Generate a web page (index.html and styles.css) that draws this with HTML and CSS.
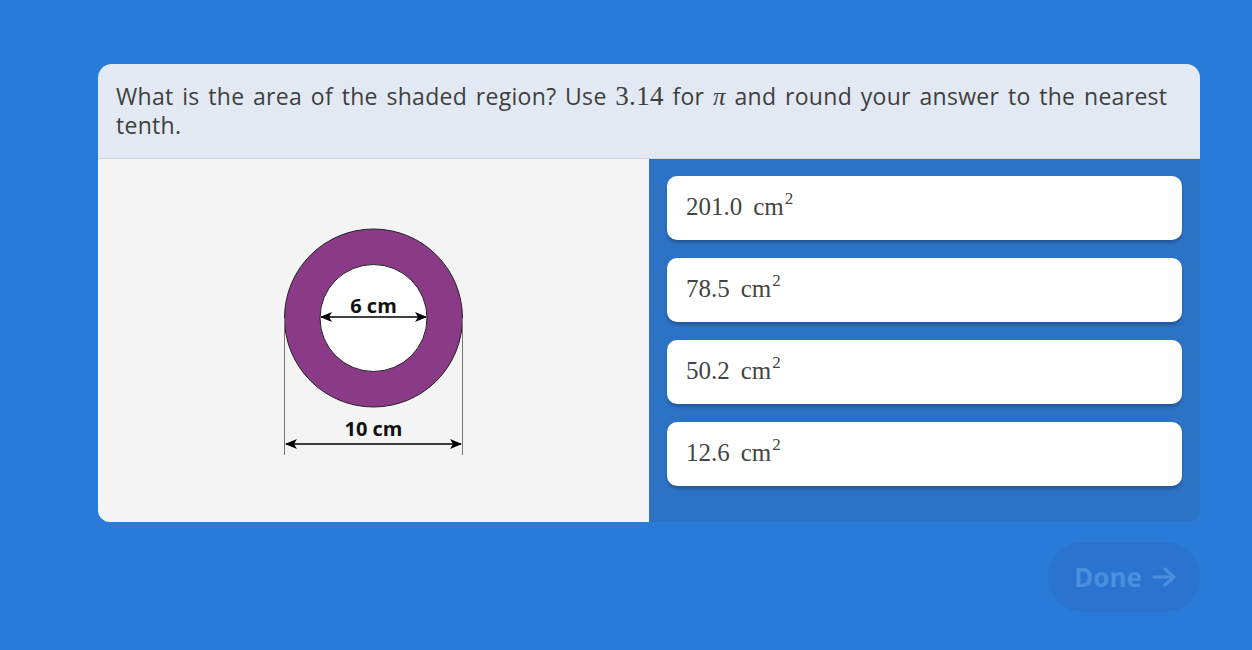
FILE: index.html
```html
<!DOCTYPE html>
<html>
<head>
<meta charset="utf-8">
<link rel="stylesheet" href="styles.css">
</head>
<body>
<div class="page">
  <div class="card">
    <div class="question">What is the area of the shaded region? Use <span class="math">3.14</span> for <span class="math pi">π</span> and round your answer to the nearest tenth.</div>
    <div class="body">
      <div class="figure">
        <svg width="190" height="232" viewBox="0 0 190 232">
          <defs>
            <marker id="ah" markerWidth="12" markerHeight="10" refX="11" refY="5" orient="auto-start-reverse" markerUnits="userSpaceOnUse">
              <path d="M0 0 L12 5 L0 10 L3 5 Z" fill="#000"/>
            </marker>
          </defs>
          <circle cx="94.5" cy="92" r="89" fill="#8a3a86" stroke="#222" stroke-width="1"/>
          <circle cx="94.5" cy="92" r="53.5" fill="#fff" stroke="#222" stroke-width="1"/>
          <line x1="5.5" y1="92" x2="5.5" y2="229" stroke="#777" stroke-width="1"/>
          <line x1="183.5" y1="92" x2="183.5" y2="229" stroke="#777" stroke-width="1"/>
          <line x1="7" y1="218" x2="182" y2="218" stroke="#000" stroke-width="1.3" marker-start="url(#ah)" marker-end="url(#ah)"/>
          <line x1="42" y1="91" x2="147" y2="91" stroke="#000" stroke-width="1.3" marker-start="url(#ah)" marker-end="url(#ah)"/>
          <text x="94.5" y="87" class="lbl">6 cm</text>
          <text x="94.5" y="210" class="lbl">10 cm</text>
        </svg>
      </div>
      <div class="answers">
        <div class="answer"><span class="num">201.0</span><span class="unit">cm<sup>2</sup></span></div>
        <div class="answer"><span class="num">78.5</span><span class="unit">cm<sup>2</sup></span></div>
        <div class="answer"><span class="num">50.2</span><span class="unit">cm<sup>2</sup></span></div>
        <div class="answer"><span class="num">12.6</span><span class="unit">cm<sup>2</sup></span></div>
      </div>
    </div>
  </div>
  <div class="footer">
    <button class="done">Done <svg width="26" height="22" viewBox="0 0 26 22"><path d="M2 11 H22 M13 3 L22 11 L13 19" fill="none" stroke="currentColor" stroke-width="3.2" stroke-linecap="round" stroke-linejoin="round"/></svg></button>
  </div>
</div>
</body>
</html>
```
FILE: styles.css
```css
html, body {
  margin: 0;
  padding: 0;
}
body {
  background: #2a7ad8;
  width: 1252px;
  height: 650px;
  overflow: hidden;
  font-family: "Open Sans", "Liberation Sans", sans-serif;
}
.page {
  padding: 64px 52px 0 98px;
}
.card {
  width: 1102px;
  border-radius: 14px 14px 12px 12px;
  overflow: hidden;
}
.question {
  background: #e2e9f2;
  color: #3f3f3f;
  font-size: 23px;
  font-weight: 500;
  line-height: 29px;
  padding: 18px 18px 18px 18px;
  border-bottom: 1px solid #cfd6de;
  letter-spacing: 0.3px;
  word-spacing: 2.4px;
}
.math {
  font-family: "Liberation Serif", "DejaVu Serif", serif;
  font-weight: 400;
  font-size: 27px;
  line-height: 1;
  letter-spacing: 0.3px;
}
.pi {
  font-style: italic;
  font-size: 25px;
}
.body {
  display: flex;
  height: 363px;
}
.figure {
  width: 551px;
  background: #f4f4f4;
  display: flex;
  align-items: center;
  justify-content: center;
  padding-top: 2px;
  box-sizing: border-box;
}
.figure svg {
  display: block;
  margin-left: 1px;
}
.lbl {
  font-family: "Open Sans", "DejaVu Sans", sans-serif;
  font-weight: 700;
  font-size: 20px;
  text-anchor: middle;
  fill: #111;
}
.answers {
  flex: 1;
  background: #2d73c5;
  padding: 17px 18px 0 18px;
  display: flex;
  flex-direction: column;
  gap: 18px;
}
.answer {
  height: 64px;
  background: #fff;
  border-radius: 10px;
  box-shadow: 0 3px 3px rgba(20, 40, 80, 0.35);
  box-sizing: border-box;
  padding: 16px 19px 0 19px;
  font-family: "Liberation Serif", "DejaVu Serif", serif;
  font-size: 25px;
  color: #444;
  line-height: 30px;
}
.answer .num {
  margin-right: 11px;
}
.answer sup {
  font-size: 17px;
  line-height: 0;
  vertical-align: 0;
  position: relative;
  top: -11px;
  margin-left: 1px;
}
.footer {
  display: flex;
  justify-content: flex-end;
  padding-top: 20px;
}
.done {
  width: 152px;
  height: 70px;
  border-radius: 35px;
  border: none;
  background: #2a73cf;
  color: #4a8ee0;
  font-family: "Open Sans", "Liberation Sans", sans-serif;
  font-weight: 700;
  font-size: 26px;
  display: flex;
  align-items: center;
  justify-content: center;
  gap: 10px;
  padding: 0 0 0 4px;
}
.done svg {
  display: block;
}
```
